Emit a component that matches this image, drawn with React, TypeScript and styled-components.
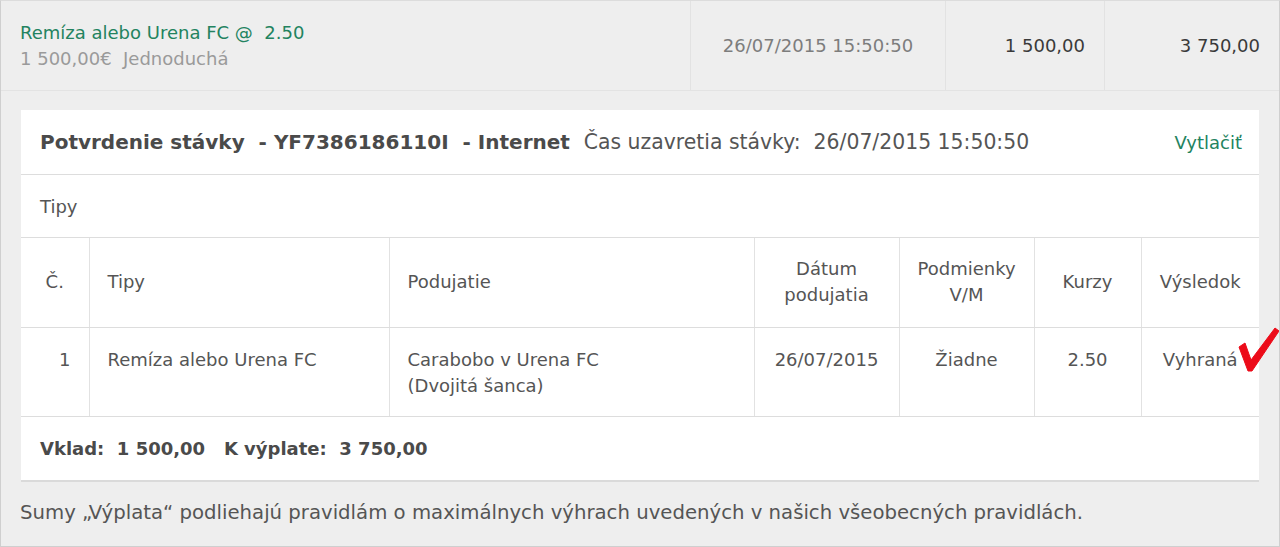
import styled, { createGlobalStyle } from 'styled-components';

const GlobalStyle = createGlobalStyle`
    html, body {
        margin: 0;
        padding: 0;
        background: #ffffff;
    }
    body {
        font-family: "DejaVu Sans", Verdana, sans-serif;
        font-size: 18px;
        color: #555;
    }
`

const green = '#23835f';

const Page = styled.div`
    box-sizing: border-box;
    width: 1280px;
    height: 547px;
    background: #eeeeee;
    border: 1px solid #cfcfcf;
    border-top-color: #dcdcdc;
    overflow: hidden;
`

const SummaryRow = styled.div`
    display: grid;
    grid-template-columns: 689px 255px 159px 1fr;
    height: 89px;
    border-bottom: 1px solid #e3e3e3;
`

const SummaryCell = styled.div<{ align?: string }>`
    display: flex;
    align-items: center;
    justify-content: ${({ align }) => align === 'right' ? 'flex-end' : align === 'center' ? 'center' : 'flex-start'};
    padding: 0 19px;
    border-left: 1px solid #e2e2e2;
    &:first-child { border-left: none; }
`

const BetInfo = styled.div`
    display: flex;
    flex-direction: column;
    gap: 4px;
    line-height: 22px;
`

const BetTitle = styled.span`
    color: ${green};
    white-space: pre;
`

const BetMeta = styled.span`
    color: #9a9a9a;
    white-space: pre;
`

const SummaryText = styled.span<{ tone?: string }>`
    color: ${({ tone }) => tone === 'light' ? '#7d7d7d' : '#3a3a3a'};
`

const Card = styled.div`
    margin: 19px 20px 0 20px;
    background: #ffffff;
    border-bottom: 2px solid #dadada;
`

const CardHeader = styled.div`
    display: flex;
    align-items: center;
    height: 64px;
    padding: 0 17px 0 19px;
    border-bottom: 1px solid #dddddd;
    font-size: 20px;
    color: #555;
`

const HeaderTitle = styled.span`
    font-weight: bold;
    color: #4a4a4a;
    white-space: pre;
`

const HeaderTime = styled.span`
    white-space: pre;
    font-size: 20.4px;
    flex: 1;
`

const PrintLink = styled.a`
    color: ${green};
    font-size: 18px;
    text-decoration: none;
    cursor: pointer;
`

const SectionLabel = styled.div`
    height: 62px;
    display: flex;
    align-items: center;
    padding-left: 19px;
    border-bottom: 1px solid #dddddd;
`

const Table = styled.table`
    width: 100%;
    border-collapse: collapse;
    table-layout: fixed;
`

const Th = styled.th<{ align?: string; w?: number }>`
    box-sizing: border-box;
    width: ${({ w }) => w ? `${w}px` : 'auto'};
    height: 89px;
    font-weight: normal;
    text-align: ${({ align }) => align || 'center'};
    padding: 0 18px;
    line-height: 26px;
    border-left: 1px solid #e2e2e2;
    border-bottom: 1px solid #dddddd;
    &:first-child { border-left: none; }
`

const Td = styled.td<{ align?: string }>`
    position: relative;
    height: 89px;
    box-sizing: border-box;
    vertical-align: top;
    text-align: ${({ align }) => align || 'center'};
    padding: 19px 18px 0;
    line-height: 26px;
    border-left: 1px solid #e2e2e2;
    border-bottom: 1px solid #dddddd;
    &:first-child { border-left: none; }
`

const CheckMark = styled.svg`
    position: absolute;
    right: -21px;
    top: -1px;
`

const CardFooter = styled.div`
    height: 63px;
    display: flex;
    align-items: center;
    padding-left: 19px;
    font-weight: bold;
    color: #4a4a4a;
    white-space: pre;
`

const Disclaimer = styled.p`
    margin: 0;
    padding: 19px 19px 0;
    font-size: 19.7px;
    color: #555;
`

export default function App() {
    return (
        <Page>
            <GlobalStyle />
            <SummaryRow>
                <SummaryCell>
                    <BetInfo>
                        <BetTitle>Remíza alebo Urena FC @  2.50</BetTitle>
                        <BetMeta>1 500,00€  Jednoduchá</BetMeta>
                    </BetInfo>
                </SummaryCell>
                <SummaryCell align='center'>
                    <SummaryText tone='light'>26/07/2015 15:50:50</SummaryText>
                </SummaryCell>
                <SummaryCell align='right'>
                    <SummaryText>1 500,00</SummaryText>
                </SummaryCell>
                <SummaryCell align='right'>
                    <SummaryText>3 750,00</SummaryText>
                </SummaryCell>
            </SummaryRow>

            <Card>
                <CardHeader>
                    <HeaderTitle>Potvrdenie stávky  - YF7386186110I  - Internet  </HeaderTitle>
                    <HeaderTime>Čas uzavretia stávky:  26/07/2015 15:50:50</HeaderTime>
                    <PrintLink>Vytlačiť</PrintLink>
                </CardHeader>
                <SectionLabel>Tipy</SectionLabel>
                <Table>
                    <thead>
                        <tr>
                            <Th w={68}>Č.</Th>
                            <Th w={300} align='left'>Tipy</Th>
                            <Th w={365} align='left'>Podujatie</Th>
                            <Th w={145}>Dátum<br />podujatia</Th>
                            <Th w={135}>Podmienky<br />V/M</Th>
                            <Th w={107}>Kurzy</Th>
                            <Th>Výsledok</Th>
                        </tr>
                    </thead>
                    <tbody>
                        <tr>
                            <Td align='right'>1</Td>
                            <Td align='left'>Remíza alebo Urena FC</Td>
                            <Td align='left'>Carabobo v Urena FC<br />(Dvojitá šanca)</Td>
                            <Td>26/07/2015</Td>
                            <Td>Žiadne</Td>
                            <Td>2.50</Td>
                            <Td>
                                Vyhraná
                                <CheckMark width="42" height="46" viewBox="0 0 42 46">
                                    <path d="M1 20 L7 16 L13 33 L37 1 L41 4 L14 44 L10 44 Z" fill="#ec0b19" strokeLinejoin="round" stroke="#ec0b19" strokeWidth="1" />
                                </CheckMark>
                            </Td>
                        </tr>
                    </tbody>
                </Table>
                <CardFooter>Vklad:  1 500,00   K výplate:  3 750,00</CardFooter>
            </Card>

            <Disclaimer>Sumy „Výplata“ podliehajú pravidlám o maximálnych výhrach uvedených v našich všeobecných pravidlách.</Disclaimer>
        </Page>
    )
}
